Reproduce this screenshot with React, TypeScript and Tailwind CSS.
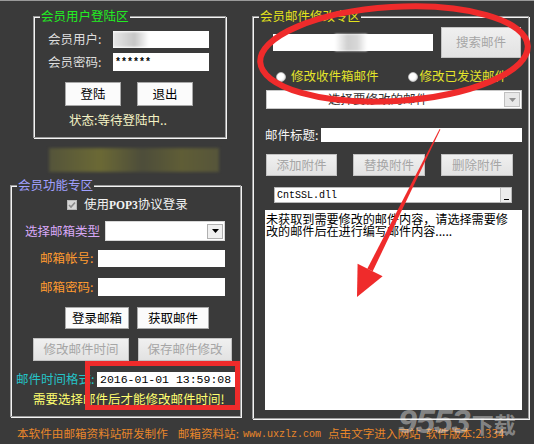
import React from "react";

// Classic WinForms-ish mail tool, dark skin, with red annotations on top.

function GroupBox({
  title,
  titleClass,
  className,
  children,
}: {
  title: string;
  titleClass: string;
  className: string;
  children: React.ReactNode;
}) {
  return (
    <div className={`relative border border-[#9c9c9c] shadow-[inset_1px_1px_0_#f4f4f4,1px_1px_0_#f4f4f4] ${className}`}>
      <span className={`absolute left-[6px] -top-[9px] px-[1px] bg-[#3a3a3a] text-[12.5px] leading-[16px] ${titleClass}`}>
        {title}
      </span>
      {children}
    </div>
  );
}

function Btn({
  children,
  className,
  disabled,
}: {
  children: React.ReactNode;
  className: string;
  disabled?: boolean;
}) {
  return (
    <div
      className={`flex items-center justify-center text-[12.5px] leading-none border ${
        disabled
          ? "bg-[linear-gradient(#f0f0f0,#e2e2e2)] border-[#c2c2c2] text-[#a6a6a6]"
          : "bg-[#fbfbfb] border-[#a9a9a9] text-black"
      } ${className}`}
    >
      {children}
    </div>
  );
}

function Radio() {
  return (
    <span className="w-[10px] h-[10px] rounded-full bg-[radial-gradient(circle_at_40%_40%,#ffffff_45%,#cfcfcf)] border border-[#bdbdbd]" />
  );
}

function Annotations() {
  // tapered shaft + arrow head
  return (
    <svg className="absolute inset-0 pointer-events-none" width="534" height="444" viewBox="0 0 534 444">
      <ellipse
        cx="394"
        cy="53"
        rx="134"
        ry="47"
        fill="none"
        stroke="#ef2b2b"
        strokeWidth="6"
        transform="rotate(-3.5 394 53)"
      />
      <rect x="87.5" y="362.5" width="150" height="44" fill="none" stroke="#ef2b2b" strokeWidth="5" />
      <polygon points="439.6,128 440.4,128.6 372.7,270.3 367.3,267.7" fill="#ef2b2b" />
      <polygon points="357,296 357.6,262.8 382.6,275.2" fill="#ef2b2b" />
    </svg>
  );
}

export default function App() {
  return (
    <div className="relative w-[534px] h-[444px] overflow-hidden bg-[#3a3a3a] border-t border-[#9a9a9a] font-['Noto_Sans_CJK_SC',sans-serif] select-none">
      <div className="flex">
        {/* left column */}
        <div className="w-[252px] flex flex-col">
          <GroupBox title="会员用户登陆区" titleClass="text-[#22ee22]" className="ml-[33px] mt-[15px] w-[193px] h-[122px]">
            <div className="flex flex-col pt-[14px]">
              <div className="flex items-center h-[17px]">
                <span className="ml-[14px] w-[65px] text-[12.5px] text-[#dedede]">会员用户:</span>
                <div className="w-[96px] h-[17px] bg-white relative overflow-hidden">
                  <div className="w-[36px] h-[15px] mt-[1px] bg-[linear-gradient(90deg,#e8e8e8,#c6c6c6_60%,#ffffff)] blur-[1px]" />
                </div>
              </div>
              <div className="flex items-center h-[18px] mt-[5px]">
                <span className="ml-[14px] w-[65px] text-[12.5px] text-[#dedede]">会员密码:</span>
                <div className="w-[96px] h-[18px] bg-white flex items-center pl-[2px] font-['Liberation_Mono',monospace] font-bold text-[10px] text-black">
                  ******
                </div>
              </div>
              <div className="flex gap-[16px] ml-[31px] mt-[11px]">
                <Btn className="w-[56px] h-[24px]">登陆</Btn>
                <Btn className="w-[56px] h-[24px]">退出</Btn>
              </div>
              <span className="ml-[35px] mt-[6px] text-[12.5px] leading-[16px] text-[#f4f2c4]">状态:等待登陆中..</span>
            </div>
          </GroupBox>

          <div className="ml-[49px] mt-[10px] w-[170px] h-[24px] bg-[linear-gradient(90deg,#54543a,#6b6935_30%,#4d4d3a_55%,#5f5d36_78%,#56553a)] blur-[1.5px]" />

          <GroupBox title="会员功能专区" titleClass="text-[#a0a0ff]" className="ml-[10px] mt-[13px] w-[231px] h-[232px]">
            <div className="flex flex-col pt-[13px]">
              <div className="flex items-center h-[11px]">
                <span className="ml-[56px] w-[10px] h-[10px] bg-[#d6d6d6] border border-[#b8b8b8] flex items-center justify-center">
                  <svg width="8" height="8" viewBox="0 0 8 8">
                    <path d="M1 4 L3 6 L7 1.5" fill="none" stroke="#8a8a8a" strokeWidth="1.6" />
                  </svg>
                </span>
                <span className="ml-[7px] text-[12.5px] text-[#f2f2f2]">
                  使用<span className="font-['Liberation_Serif',serif] font-bold text-[11.5px]">POP3</span>协议登录
                </span>
              </div>
              <div className="flex items-center h-[20px] mt-[11px]">
                <span className="ml-[14px] w-[80px] text-[12.5px] text-[#d8a8f6]">选择邮箱类型</span>
                <div className="w-[120px] h-[20px] bg-white border border-[#d8d8d8] flex justify-end items-center pr-[1px]">
                  <div className="w-[16px] h-[15px] bg-[#f0f0f0] border border-[#b0b0b0] flex items-center justify-center">
                    <svg width="7" height="4" viewBox="0 0 7 4">
                      <path d="M0 0 H7 L3.5 4 Z" fill="#000" />
                    </svg>
                  </div>
                </div>
              </div>
              <div className="flex items-center h-[17px] mt-[9px]">
                <span className="ml-[29px] w-[58px] text-[12.5px] text-[#ff9a30]">邮箱帐号:</span>
                <div className="w-[127px] h-[17px] bg-white" />
              </div>
              <div className="flex items-center h-[18px] mt-[11px]">
                <span className="ml-[29px] w-[58px] text-[12.5px] text-[#ff9a30]">邮箱密码:</span>
                <div className="w-[127px] h-[18px] bg-white" />
              </div>
              <div className="flex mt-[11px] ml-[54px] gap-[8px]">
                <Btn className="w-[64px] h-[22px]">登录邮箱</Btn>
                <Btn className="w-[72px] h-[22px]">获取邮件</Btn>
              </div>
              <div className="flex mt-[9px] ml-[22px] gap-[9px]">
                <Btn disabled className="w-[96px] h-[23px]">修改邮件时间</Btn>
                <Btn disabled className="w-[94px] h-[23px]">保存邮件修改</Btn>
              </div>
              <div className="flex items-center h-[15px] mt-[11px]">
                <span className="ml-[5px] w-[81px] text-[12.5px] text-[#25c3c8] whitespace-nowrap overflow-hidden">邮件时间格式:</span>
                <div className="w-[138px] h-[15px] bg-white flex items-center pl-[3px] font-['Liberation_Mono',monospace] text-[11.5px] text-black">
                  2016-01-01 13:59:08
                </div>
              </div>
              <span className="ml-[22px] mt-[4px] text-[12.5px] leading-[16px] text-[#ffff70]">需要选择邮件后才能修改邮件时间!</span>
            </div>
          </GroupBox>
        </div>

        {/* right column */}
        <GroupBox title="会员邮件修改专区" titleClass="text-[#e2e21c]" className="mt-[15px] w-[277px] h-[403px]">
          <div className="flex flex-col pt-[10px]">
            <div className="flex items-start">
              <div className="ml-[20px] mt-[7px] w-[160px] h-[17px] bg-white">
                <div className="ml-[62px] w-[32px] h-[17px] bg-[linear-gradient(90deg,#ffffff,#cfcfcf_40%,#d8d8d8_70%,#ffffff)] blur-[1px]" />
              </div>
              <Btn disabled className="ml-[8px] w-[80px] h-[31px]">搜索邮件</Btn>
            </div>
            <div className="flex items-center h-[13px] mt-[12px] text-[12.5px] text-[#e4e42a]">
              <span className="ml-[23px] flex items-center"><Radio /></span>
              <span className="ml-[5px]">修改收件箱邮件</span>
              <span className="ml-[29px] flex items-center"><Radio /></span>
              <span className="ml-[2px]">修改已发送邮件</span>
            </div>
            <div className="ml-[13px] mt-[7px] w-[256px] h-[19px] bg-white border border-[#c8c8c8] flex items-center">
              <span className="ml-[61px] text-[12.5px] text-[#333] leading-none">选择要修改的邮件</span>
              <div className="ml-auto mr-[1px] w-[16px] h-[15px] bg-[#e8e8e8] border border-[#c0c0c0] flex items-center justify-center">
                <svg width="7" height="4" viewBox="0 0 7 4">
                  <path d="M0 0 H7 L3.5 4 Z" fill="#909090" />
                </svg>
              </div>
            </div>
            <div className="flex items-center h-[14px] mt-[19px]">
              <span className="ml-[12px] w-[56px] text-[12.5px] text-[#f4f4f4]">邮件标题:</span>
              <div className="w-[201px] h-[14px] bg-white" />
            </div>
            <div className="flex ml-[13px] mt-[12px] gap-[16px]">
              <Btn disabled className="w-[71px] h-[22px]">添加附件</Btn>
              <Btn disabled className="w-[72px] h-[22px]">替换附件</Btn>
              <Btn disabled className="w-[72px] h-[22px]">删除附件</Btn>
            </div>
            <div className="ml-[21px] mt-[11px] w-[238px] h-[16px] bg-white border border-[#b8b8b8] flex items-center">
              <span className="ml-[2px] font-['Liberation_Mono',monospace] text-[10px] text-black">CntSSL.dll</span>
              <div className="ml-auto w-[11px] h-[14px] bg-[#ececec] border-l border-[#c0c0c0] flex items-end justify-center pb-[2px]">
                <div className="w-[5px] h-[1px] bg-black" />
              </div>
            </div>
            <div className="ml-[12px] mt-[7px] w-[257px] h-[200px] bg-white px-[1px] pt-[3px] text-[12.1px] leading-[12px] text-black">
              <div className="whitespace-nowrap">未获取到需要修改的邮件内容，请选择需要修</div>
              <div className="whitespace-nowrap">改的邮件后在进行编写邮件内容.....</div>
            </div>
          </div>
        </GroupBox>
      </div>

      {/* footer */}
      <div className="flex items-center h-[20px] mt-[5px] pl-[17px] text-[11.6px] text-[#e8862a] whitespace-nowrap">
        <span>本软件由邮箱资料站研发制作</span>
        <span className="ml-[10px]">邮箱资料站:</span>
        <span className="ml-[4px] font-['Liberation_Mono',monospace] text-[10px]">www.uxzlz.com</span>
        <span className="ml-[7px]">点击文字进入网站</span>
        <span className="ml-[5px]">软件版本:2.334</span>
      </div>

      <Annotations />

      {/* site watermark */}
      <div className="absolute left-[398px] top-[403px] flex items-end pointer-events-none text-white/40">
        <span className="font-['Liberation_Sans',sans-serif] font-bold italic text-[34px] leading-none tracking-[-1px]">9553</span>
        <span className="ml-[2px] font-bold text-[22px] leading-none mb-[4px]">下载</span>
      </div>
    </div>
  );
}
